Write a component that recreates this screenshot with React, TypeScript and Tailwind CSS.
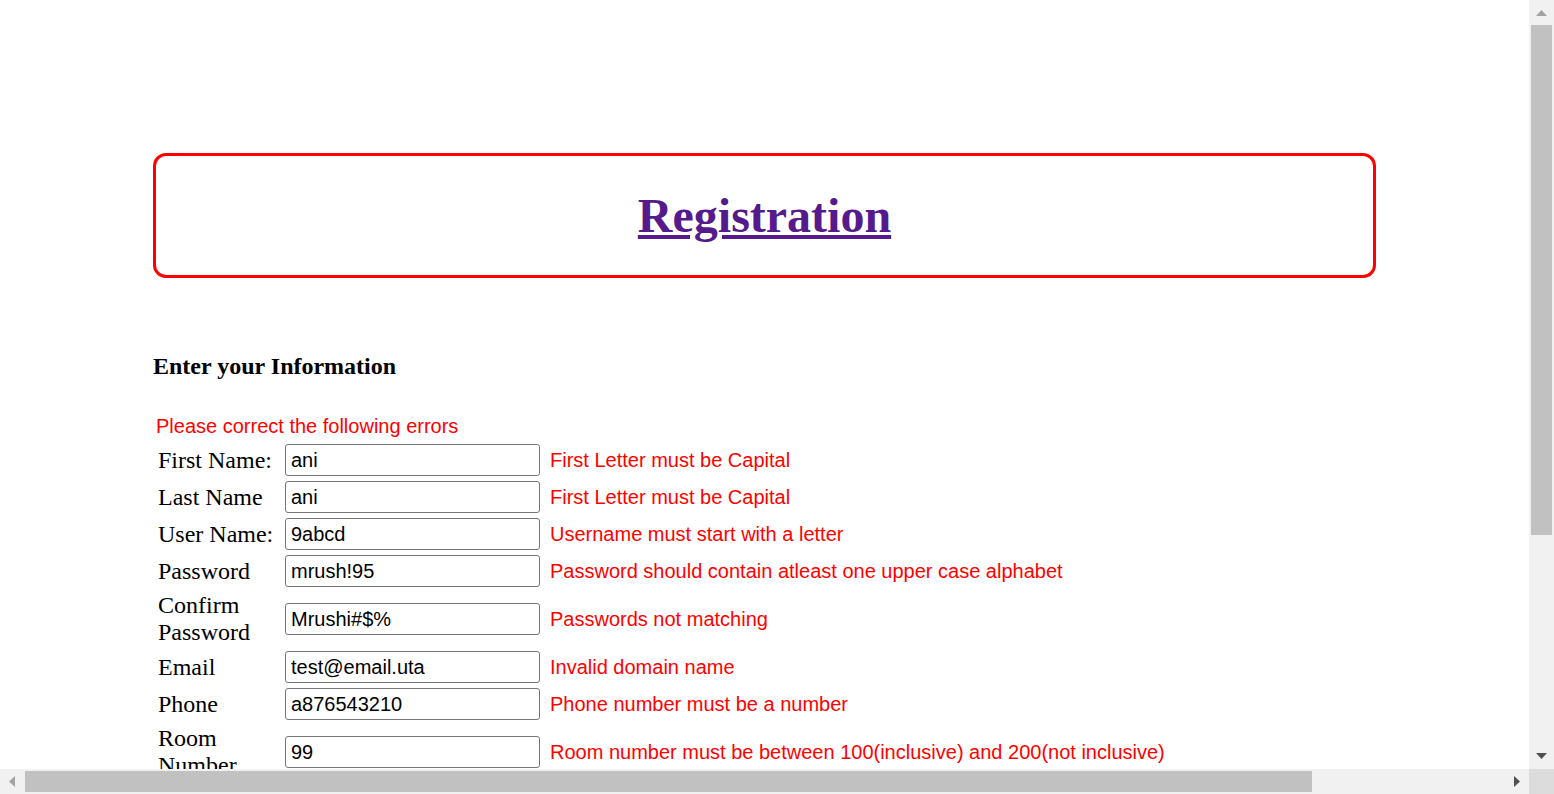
const rows = [
  { label: "First Name:", value: "ani", error: "First Letter must be Capital" },
  { label: "Last Name", value: "ani", error: "First Letter must be Capital" },
  { label: "User Name:", value: "9abcd", error: "Username must start with a letter" },
  { label: "Password", value: "mrush!95", error: "Password should contain atleast one upper case alphabet" },
  { label: "Confirm Password", value: "Mrushi#$%", error: "Passwords not matching" },
  { label: "Email", value: "test@email.uta", error: "Invalid domain name" },
  { label: "Phone", value: "a876543210", error: "Phone number must be a number" },
  { label: "Room Number", value: "99", error: "Room number must be between 100(inclusive) and 200(not inclusive)" },
];

const serif = "font-['Liberation_Serif','Times_New_Roman',serif]";
const sans = "font-['Liberation_Sans',Arial,sans-serif]";

const FormRow = ({ label, value, error }: { label: string; value: string; error: string }) => {
  return (
    <div className="flex items-center min-h-[32px]">
      <div className={`w-[132px] shrink-0 pl-[5px] pr-[4px] text-[24px] leading-[27px] text-black ${serif}`}>
        {label}
      </div>
      <input
        type="text"
        defaultValue={value}
        className={`w-[255px] h-[32px] shrink-0 border border-[#767676] rounded-[3px] pl-[5px] text-[20px] text-black bg-white outline-none ${sans}`}
      />
      <span className={`ml-[10px] text-[20px] leading-[23px] text-[#ff0000] whitespace-nowrap ${sans}`}>{error}</span>
    </div>
  );
};

const VerticalScrollbar = () => {
  return (
    <div className="w-[25px] shrink-0 bg-[#f1f1f1] flex flex-col">
      <div className="h-[25px]">
        <svg width="25" height="25" viewBox="0 0 25 25">
          <polygon points="7,16 18,16 12.5,10" fill="#a3a3a3" />
        </svg>
      </div>
      <div className="flex-1">
        <div className="mx-[2px] h-[510px] bg-[#c1c1c1]" />
      </div>
      <div className="h-[25px]">
        <svg width="25" height="25" viewBox="0 0 25 25">
          <polygon points="7,9 18,9 12.5,15" fill="#505050" />
        </svg>
      </div>
    </div>
  );
};

const HorizontalScrollbar = () => {
  return (
    <div className="h-[25px] flex bg-[#f1f1f1]">
      <div className="w-[25px] shrink-0">
        <svg width="25" height="25" viewBox="0 0 25 25">
          <polygon points="15,7 15,18 9,12.5" fill="#a3a3a3" />
        </svg>
      </div>
      <div className="flex-1 py-[2px]">
        <div className="w-[1287px] h-full bg-[#c1c1c1]" />
      </div>
      <div className="w-[25px] shrink-0">
        <svg width="25" height="25" viewBox="0 0 25 25">
          <polygon points="10,7 10,18 16,12.5" fill="#505050" />
        </svg>
      </div>
      <div className="w-[25px] shrink-0 bg-[#dcdcdc]" />
    </div>
  );
};

export default function App() {
  return (
    <div className="w-[1554px] h-[794px] flex flex-col overflow-hidden bg-white">
      <div className="flex h-[769px]">
        <main className="w-[1529px] shrink-0 overflow-hidden">
          <div className="w-[1223px] ml-[153px] pt-[153px]">
            <div className="border-[3px] border-[#ff0000] rounded-[13px]">
              <h1
                className={`my-[32px] text-center text-[48px] leading-[55px] font-bold text-[#551a8b] underline ${serif}`}
              >
                Registration
              </h1>
            </div>

            <h4 className={`mt-[75px] text-[24px] leading-[27px] font-bold text-black ${serif}`}>
              Enter your Information
            </h4>

            <div className={`mt-[35px] pl-[3px] text-[20px] leading-[23px] text-[#ff0000] ${sans}`}>
              Please correct the following errors
            </div>

            <div className="mt-[6px] flex flex-col gap-[5px]">
              {rows.map((r) => (
                <FormRow key={r.label} label={r.label} value={r.value} error={r.error} />
              ))}
            </div>
          </div>
        </main>
        <VerticalScrollbar />
      </div>
      <HorizontalScrollbar />
    </div>
  );
}
